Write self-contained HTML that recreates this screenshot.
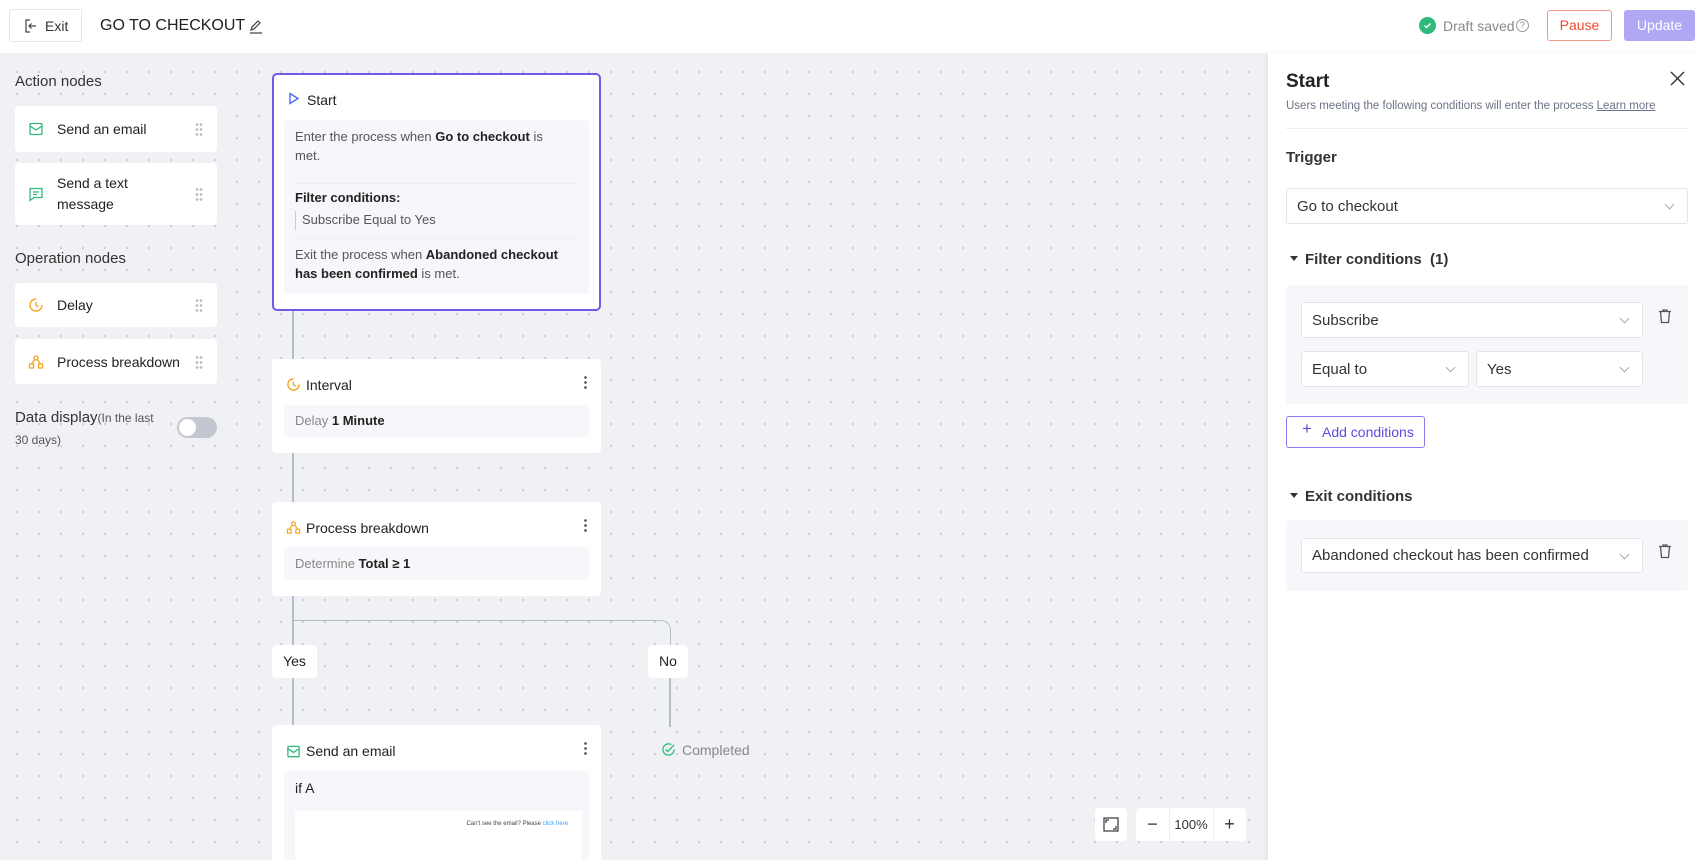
<!DOCTYPE html>
<html><head><meta charset="utf-8"><style>
*{box-sizing:border-box;margin:0;padding:0}
html,body{width:1700px;height:860px;overflow:hidden}
body{font-family:"Liberation Sans",sans-serif;color:#222;background:#fff;position:relative;font-size:14px}
.a{position:absolute}
.hdr{left:0;top:0;width:1700px;height:53px;background:#fff}
.canvas{left:0;top:53px;width:1268px;height:807px;background-color:#f0f1f5;background-image:radial-gradient(circle,#c9ccd6 1px,transparent 1.3px);background-size:22px 22px;background-position:6px 8px}
.card{background:#fff;border-radius:4px}
.lc{left:15px;width:202px;background:#fff;border-radius:4px;display:flex;align-items:center;padding-left:42px;font-size:14px;color:#222}
.grip{position:absolute;right:14px;top:50%;margin-top:-7px;width:8px;height:14px;background-image:radial-gradient(circle,#b8bcc6 1.2px,transparent 1.5px);background-size:4px 5px}
.ico{position:absolute;left:13px;top:50%;margin-top:-8px}
.node{left:272px;width:329px;background:#fff;border-radius:4px}
.inner{background:#f6f7fa;border-radius:3px;position:absolute;left:12px;right:12px}
.sel{position:absolute;background:#fff;border:1px solid #e3e5ea;border-radius:3px;font-size:15px;color:#333;padding-left:10px;display:flex;align-items:center}
.sel:after{content:"";position:absolute;right:14px;top:50%;margin-top:-5px;width:6px;height:6px;border-right:1px solid #aaa;border-bottom:1px solid #aaa;transform:rotate(45deg)}
.dots{position:absolute;right:14px;top:16px;width:3px;height:14px;background-image:radial-gradient(circle,#666 1.3px,transparent 1.5px);background-size:3px 5px}
.line{background:#b7bcc8}
</style></head><body>
<div class="a hdr"></div>
<div class="a" style="left:9px;top:9px;width:73px;height:33px;border:1px solid #e3e5ea;border-radius:3px;display:flex;align-items:center;padding-left:14px;font-size:14px;color:#333">
<svg width="14" height="14" viewBox="0 0 14 14" fill="none" stroke="#444" stroke-width="1.2"><path d="M6 1H2v12h4M5 7h7M7.5 4.5L5 7l2.5 2.5"/></svg><span style="margin-left:7px">Exit</span></div>
<div class="a" style="left:100px;top:17px;font-size:16px;color:#222">GO TO CHECKOUT</div>
<svg class="a" style="left:248px;top:18px" width="16" height="16" viewBox="0 0 16 16" fill="none" stroke="#444" stroke-width="1.2"><path d="M3 12l1-3 6-6 2 2-6 6-3 1zM2 15h12"/></svg>
<div class="a" style="left:1419px;top:17px;width:17px;height:17px;border-radius:50%;background:#2fba7c"></div>
<svg class="a" style="left:1422px;top:20px" width="11" height="11" viewBox="0 0 11 11" fill="none" stroke="#fff" stroke-width="1.4"><path d="M2.5 5.5l2 2 4-4"/></svg>
<div class="a" style="left:1443px;top:18px;font-size:14px;color:#888">Draft saved</div>
<div class="a" style="left:1516px;top:19px;width:13px;height:13px;border:1px solid #999;border-radius:50%;font-size:9px;color:#888;text-align:center;line-height:11px">?</div>
<div class="a" style="left:1547px;top:10px;width:65px;height:31px;border:1px solid #f19a8c;border-radius:3px;color:#f04a2e;font-size:14px;text-align:center;line-height:29px">Pause</div>
<div class="a" style="left:1624px;top:10px;width:71px;height:31px;background:#b0a8f5;border-radius:3px;color:#fff;font-size:14px;text-align:center;line-height:31px">Update</div>

<div class="a canvas"></div>
<div class="a" style="left:15px;top:73px;font-size:15px;color:#333">Action nodes</div>
<div class="a lc" style="top:106px;height:46px"><svg class="ico" width="16" height="16" viewBox="0 0 16 16" fill="none" stroke="#2fba7c" stroke-width="1.3"><rect x="2" y="2.5" width="12" height="11" rx="1"/><path d="M2 5l6 4 6-4"/></svg>Send an email<div class="grip"></div></div>
<div class="a lc" style="top:163px;height:62px;line-height:21px"><svg class="ico" width="16" height="16" viewBox="0 0 16 16" fill="none" stroke="#2fba7c" stroke-width="1.3"><path d="M2 2.5h12v9H6l-4 3z M5 6h6M5 8.5h4"/></svg>Send a text<br>message<div class="grip"></div></div>
<div class="a" style="left:15px;top:250px;font-size:15px;color:#333">Operation nodes</div>
<div class="a lc" style="top:283px;height:44px"><svg class="ico" width="16" height="16" viewBox="0 0 16 16" fill="none" stroke="#f5a623" stroke-width="1.4"><path d="M14 8A6 6 0 1 1 8 2M8 5v3.5l2.5 1"/></svg>Delay<div class="grip"></div></div>
<div class="a lc" style="top:339px;height:45px"><svg class="ico" width="16" height="16" viewBox="0 0 16 16" fill="none" stroke="#f5a623" stroke-width="1.3"><circle cx="8" cy="4" r="2"/><rect x="1.5" y="10" width="4" height="4"/><rect x="10.5" y="10" width="4" height="4"/><path d="M6.5 5.5L3.5 10M9.5 5.5l3 4.5"/></svg>Process breakdown<div class="grip"></div></div>
<div class="a" style="left:15px;top:407px;font-size:15px;color:#333;line-height:22px">Data display<span style="font-size:12px;color:#555">(In the last</span><br><span style="font-size:12px;color:#555">30 days)</span></div>
<div class="a" style="left:177px;top:417px;width:40px;height:21px;border-radius:11px;background:#c4c7cf"></div>
<div class="a" style="left:179px;top:419px;width:17px;height:17px;border-radius:50%;background:#fff"></div>

<div class="a line" style="left:292px;top:311px;width:1.5px;height:48px"></div>
<div class="a line" style="left:292px;top:453px;width:1.5px;height:49px"></div>
<div class="a line" style="left:292px;top:596px;width:1.5px;height:129px"></div>
<div class="a" style="left:292px;top:620px;width:379px;height:30px;border-top:1.5px solid #b7bcc8;border-right:1.5px solid #b7bcc8;border-top-right-radius:10px"></div>
<div class="a line" style="left:669px;top:650px;width:1.5px;height:77px"></div>

<div class="a node" style="top:73px;height:238px;border:2px solid #6d5ce8;border-radius:5px">
<svg class="a" style="left:14px;top:17px" width="12" height="13" viewBox="0 0 12 13" fill="none" stroke="#4e6cf2" stroke-width="1.4"><path d="M2 1.5l8 5-8 5z"/></svg>
<div class="a" style="left:33px;top:17px;font-size:14px">Start</div>
<div class="inner" style="top:45px;bottom:15px;left:10px;right:10px;font-size:13px;color:#555;line-height:18.5px">
<div style="position:absolute;left:11px;top:8px;width:270px">Enter the process when <b style="color:#222">Go to checkout</b> is met.</div>
<div style="position:absolute;left:11px;top:63px;right:11px;border-top:1px solid #eceef2"></div>
<div style="position:absolute;left:11px;top:69px;color:#222;font-weight:bold">Filter conditions:</div>
<div style="position:absolute;left:11px;top:91px;border-left:1.5px solid #ccc;padding-left:6px">Subscribe Equal to Yes</div>
<div style="position:absolute;left:11px;top:118px;right:11px;border-top:1px solid #eceef2"></div>
<div style="position:absolute;left:11px;top:126px;width:280px">Exit the process when <b style="color:#222">Abandoned checkout has been confirmed</b> is met.</div>
</div></div>

<div class="a node" style="top:359px;height:94px">
<svg class="a" style="left:14px;top:18px" width="15" height="15" viewBox="0 0 16 16" fill="none" stroke="#f5a623" stroke-width="1.5"><path d="M14 8A6 6 0 1 1 8 2M8 5v3.5l2.5 1"/></svg>
<div class="a" style="left:34px;top:18px;font-size:14px">Interval</div><div class="dots"></div>
<div class="inner" style="top:46px;height:32px;font-size:13px;color:#888;padding:8px 11px">Delay <b style="color:#222">1 Minute</b></div></div>

<div class="a node" style="top:502px;height:94px">
<svg class="a" style="left:14px;top:18px" width="15" height="15" viewBox="0 0 16 16" fill="none" stroke="#f5a623" stroke-width="1.3"><circle cx="8" cy="4" r="2"/><rect x="1.5" y="10" width="4" height="4"/><rect x="10.5" y="10" width="4" height="4"/><path d="M6.5 5.5L3.5 10M9.5 5.5l3 4.5"/></svg>
<div class="a" style="left:34px;top:18px;font-size:14px">Process breakdown</div><div class="dots"></div>
<div class="inner" style="top:45px;height:33px;font-size:13px;color:#888;padding:9px 11px">Determine <b style="color:#222">Total ≥ 1</b></div></div>

<div class="a card" style="left:272px;top:645px;width:45px;height:33px;text-align:center;line-height:33px;font-size:14px">Yes</div>
<div class="a card" style="left:648px;top:645px;width:40px;height:33px;text-align:center;line-height:33px;font-size:14px">No</div>

<div class="a node" style="top:725px;height:135px;border-radius:4px 4px 0 0;overflow:hidden">
<svg class="a" style="left:14px;top:19px" width="15" height="15" viewBox="0 0 16 16" fill="none" stroke="#2fba7c" stroke-width="1.4"><rect x="2" y="2.5" width="12" height="11" rx="1"/><path d="M2 5l6 4 6-4"/></svg>
<div class="a" style="left:34px;top:18px;font-size:14px">Send an email</div><div class="dots"></div>
<div class="inner" style="top:46px;height:100px;font-size:14px;padding:9px 11px">if A
<div style="position:absolute;left:11px;right:7px;top:40px;height:60px;background:#fff;font-size:6px;color:#444;text-align:right;padding:10px 14px">Can't see the email? Please <span style="color:#3aa0ff">click here</span></div></div></div>

<svg class="a" style="left:661px;top:742px" width="15" height="15" viewBox="0 0 16 16" fill="none" stroke="#2fba7c" stroke-width="1.4"><path d="M14 8A6 6 0 1 1 11 2.8"/><path d="M5 8l2.2 2.2L14 3"/></svg>
<div class="a" style="left:682px;top:742px;font-size:14px;color:#888">Completed</div>

<div class="a card" style="left:1095px;top:808px;width:32px;height:33px"><svg style="position:absolute;left:8px;top:9px" width="16" height="15" viewBox="0 0 16 15" fill="none" stroke="#444" stroke-width="1.3"><rect x="1" y="1" width="14" height="13"/><path d="M3 6V3h3M13 9v3h-3"/></svg></div>
<div class="a card" style="left:1136px;top:808px;width:110px;height:33px;font-size:13px;color:#333">
<div style="position:absolute;left:0;width:33px;text-align:center;line-height:33px;font-size:18px">−</div>
<div style="position:absolute;left:33px;top:0;bottom:0;border-left:1px solid #eee"></div>
<div style="position:absolute;left:33px;width:44px;text-align:center;line-height:33px">100%</div>
<div style="position:absolute;left:77px;top:0;bottom:0;border-left:1px solid #eee"></div>
<div style="position:absolute;left:77px;width:33px;text-align:center;line-height:33px;font-size:18px">+</div></div>

<div class="a" style="left:1268px;top:53px;width:432px;height:807px;background:#fff;box-shadow:-2px 0 4px rgba(0,0,0,0.06)"></div>
<div class="a" style="left:1286px;top:71px;font-size:19px;font-weight:bold;color:#222">Start</div>
<svg class="a" style="left:1670px;top:71px" width="15" height="15" viewBox="0 0 15 15" stroke="#333" stroke-width="1.4"><path d="M1 1l13 13M14 1L1 14"/></svg>
<div class="a" style="left:1286px;top:100px;font-size:11.5px;color:#6a7385">Users meeting the following conditions will enter the process <span style="text-decoration:underline">Learn more</span></div>
<div class="a" style="left:1286px;top:128px;width:402px;border-top:1px solid #eee"></div>
<div class="a" style="left:1286px;top:149px;font-size:15px;font-weight:bold;color:#333">Trigger</div>
<div class="sel" style="left:1286px;top:188px;width:402px;height:36px">Go to checkout</div>
<div class="a" style="left:1290px;top:256px;width:0;height:0;border-left:4.5px solid transparent;border-right:4.5px solid transparent;border-top:5px solid #333"></div>
<div class="a" style="left:1305px;top:251px;font-size:15px;font-weight:bold;color:#333">Filter conditions &nbsp;(1)</div>
<div class="a" style="left:1286px;top:285px;width:402px;height:119px;background:#f6f7fa;border-radius:3px"></div>
<div class="sel" style="left:1301px;top:302px;width:342px;height:36px">Subscribe</div>
<div class="sel" style="left:1301px;top:351px;width:168px;height:36px">Equal to</div>
<div class="sel" style="left:1476px;top:351px;width:167px;height:36px">Yes</div>
<svg class="a" style="left:1657px;top:308px" width="16" height="16" viewBox="0 0 16 16" fill="none" stroke="#555" stroke-width="1.3"><path d="M2 3.5h12M6 3.5V2h4v1.5M3.5 3.5l1 11h7l1-11"/></svg>
<div class="a" style="left:1286px;top:416px;width:139px;height:32px;border:1px solid #8a7cf0;border-radius:3px;color:#5b4de0;font-size:14px;line-height:30px;padding-left:35px">Add conditions</div>
<div class="a" style="left:1302px;top:419px;color:#5b4de0;font-size:17px">+</div>
<div class="a" style="left:1290px;top:493px;width:0;height:0;border-left:4.5px solid transparent;border-right:4.5px solid transparent;border-top:5px solid #333"></div>
<div class="a" style="left:1305px;top:488px;font-size:15px;font-weight:bold;color:#333">Exit conditions</div>
<div class="a" style="left:1286px;top:520px;width:402px;height:71px;background:#f6f7fa;border-radius:3px"></div>
<div class="sel" style="left:1301px;top:538px;width:342px;height:35px">Abandoned checkout has been confirmed</div>
<svg class="a" style="left:1657px;top:543px" width="16" height="16" viewBox="0 0 16 16" fill="none" stroke="#555" stroke-width="1.3"><path d="M2 3.5h12M6 3.5V2h4v1.5M3.5 3.5l1 11h7l1-11"/></svg>
</body></html>
